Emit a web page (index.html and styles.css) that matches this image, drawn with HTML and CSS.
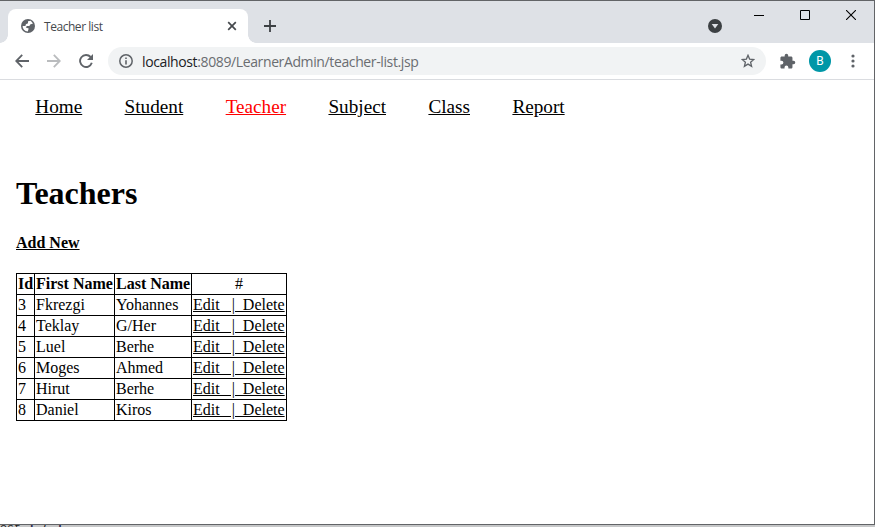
FILE: index.html
```html
<!DOCTYPE html>
<html lang="en">
<head>
<meta charset="utf-8">
<title>Teacher list</title>
<link rel="stylesheet" href="styles.css">
</head>
<body>
<div class="window">
  <header class="tabstrip">
    <div class="tab">
      <svg class="favicon" width="14" height="14" viewBox="0 0 14 14"><circle cx="7" cy="7" r="7" fill="#5f6368"/><path d="M7 2.2 9.7 1.8 12 4.6 9.2 5.4 8.4 7H5.8L4.8 8.6 7.7 9.4 6.8 12.4A5.6 5.6 0 0 1 1.6 7L4.4 7 4.9 5.2 7 4.2Z" fill="#fff"/></svg>
      <span class="tab-title">Teacher list</span>
      <svg class="tab-close" width="10" height="10" viewBox="0 0 10 10"><path d="M1.2 1.2 8.8 8.8M8.8 1.2 1.2 8.8" stroke="#45494d" stroke-width="1.7"/></svg>
    </div>
    <svg class="new-tab" width="12" height="12" viewBox="0 0 12 12"><path d="M6 0V12M0 6H12" stroke="#3c4043" stroke-width="1.8"/></svg>
    <svg class="tab-search" width="14" height="14" viewBox="0 0 14 14"><circle cx="7" cy="7" r="7" fill="#3c4043"/><path d="M3.7 5H10.3L7 9.5Z" fill="#dee1e6"/></svg>
    <div class="controls">
      <svg width="10" height="10" viewBox="0 0 10 10"><path d="M0 5.5H10" stroke="#000"/></svg>
      <svg width="10" height="10" viewBox="0 0 10 10"><path d="M.5 .5H9.5V9.5H.5Z" fill="none" stroke="#000"/></svg>
      <svg width="10" height="10" viewBox="0 0 10 10"><path d="M0 0 10 10M10 0 0 10" stroke="#000" stroke-width="1.1"/></svg>
    </div>
  </header>
  <div class="toolbar">
    <svg class="back" width="14" height="14" viewBox="0 0 14 14"><path d="M14 7H1.5M7.2 .8 1.2 7 7.2 13.2" fill="none" stroke="#5f6368" stroke-width="1.8"/></svg>
    <svg class="forward" width="14" height="14" viewBox="0 0 14 14"><path d="M0 7H12.5M6.8 .8 12.8 7 6.8 13.2" fill="none" stroke="#babcbe" stroke-width="1.8"/></svg>
    <svg class="reload" width="14" height="14" viewBox="0 0 14 14"><path d="M11.6 3A6 6 0 1 0 12.8 8.8" fill="none" stroke="#5f6368" stroke-width="1.9"/><path d="M14 0V6H8Z" fill="#5f6368"/></svg>
    <div class="address">
      <svg width="14" height="14" viewBox="0 0 14 14"><circle cx="7" cy="7" r="6.2" fill="none" stroke="#5f6368" stroke-width="1.5"/><path d="M7 6.2V10.6M7 3.4V5" stroke="#5f6368" stroke-width="1.6"/></svg>
      <span class="url"><span class="host">localhost</span>:8089/LearnerAdmin/teacher-list.jsp</span>
      <svg class="star" width="14" height="14" viewBox="0 0 14 14"><path d="M7 1.3 8.6 5.1 12.8 5.5 9.6 8.2 10.6 12.3 7 10.1 3.4 12.3 4.4 8.2 1.2 5.5 5.4 5.1Z" fill="none" stroke="#5f6368" stroke-width="1.3"/></svg>
    </div>
    <svg class="puzzle" width="17" height="17" viewBox="0 0 24 24"><path d="M20.5 11H19V7c0-1.1-.9-2-2-2h-4V3.5a2.5 2.5 0 0 0-5 0V5H4c-1.1 0-2 .9-2 2v3.8h1.5a2.7 2.7 0 0 1 0 5.4H2V20c0 1.1.9 2 2 2h3.8v-1.5a2.7 2.7 0 0 1 5.4 0V22H17c1.1 0 2-.9 2-2v-4h1.5a2.5 2.5 0 0 0 0-5z" fill="#5f6368"/></svg>
    <div class="avatar">B</div>
    <svg class="more" width="4" height="14" viewBox="0 0 4 14"><g fill="#5f6368"><circle cx="2" cy="2" r="1.6"/><circle cx="2" cy="7" r="1.6"/><circle cx="2" cy="12" r="1.6"/></g></svg>
  </div>
  <main class="page">
    <nav class="menu">
      <a>Home</a><a>Student</a><a class="active">Teacher</a><a>Subject</a><a>Class</a><a>Report</a>
    </nav>
    <h1>Teachers</h1>
    <a class="add">Add New</a>
    <table>
      <colgroup><col class="c-id"><col class="c-first"><col class="c-last"><col class="c-action"></colgroup>
      <tr><th>Id</th><th>First Name</th><th>Last Name</th><td class="hash">#</td></tr>
      <tr><td>3</td><td>Fkrezgi</td><td>Yohannes</td><td><a>Edit &nbsp;&nbsp;|&nbsp; Delete</a></td></tr>
      <tr><td>4</td><td>Teklay</td><td>G/Her</td><td><a>Edit &nbsp;&nbsp;|&nbsp; Delete</a></td></tr>
      <tr><td>5</td><td>Luel</td><td>Berhe</td><td><a>Edit &nbsp;&nbsp;|&nbsp; Delete</a></td></tr>
      <tr><td>6</td><td>Moges</td><td>Ahmed</td><td><a>Edit &nbsp;&nbsp;|&nbsp; Delete</a></td></tr>
      <tr><td>7</td><td>Hirut</td><td>Berhe</td><td><a>Edit &nbsp;&nbsp;|&nbsp; Delete</a></td></tr>
      <tr><td>8</td><td>Daniel</td><td>Kiros</td><td><a>Edit &nbsp;&nbsp;|&nbsp; Delete</a></td></tr>
    </table>
  </main>
</div>
<footer class="behind"><span class="code">ost <b>l</b> ( <b>l</b></span></footer>
</body>
</html>
```
FILE: styles.css
```css
* { box-sizing: border-box; }
body { margin: 0; height: 527px; overflow: hidden; background: #fff; }
svg { display: block; flex: none; }
.window { width: 875px; height: 525px; border: solid #626467; border-width: 1px 1px 1px 0; display: flex; flex-direction: column; }
.tabstrip { height: 42px; flex: none; background: #dee1e6; display: flex; padding-left: 8px; }
.tab { position: relative; width: 240px; height: 34px; margin-top: 8px; background: #fff; border-radius: 8px 8px 0 0; display: flex; align-items: center; padding: 0 11px 0 13px; font: 12px "Open Sans", sans-serif; color: #45494d; }
.tab::before, .tab::after { content: ""; position: absolute; bottom: 0; width: 8px; height: 8px; }
.tab::before { left: -8px; background: radial-gradient(circle at 0 0, transparent 7.5px, #fff 8px); }
.tab::after { right: -8px; background: radial-gradient(circle at 100% 0, transparent 7.5px, #fff 8px); }
.tab-title { margin-left: 9px; letter-spacing: -.45px; }
.tab-close { margin-left: auto; }
.new-tab { margin: 19px 0 0 16px; }
.tab-search { margin: 18px 0 0 auto; }
.controls { display: flex; gap: 36px; margin: 9px 18px 0 32px; }
.toolbar { height: 37px; flex: none; border-bottom: 1px solid #dadce0; display: flex; align-items: center; padding: 0 19px 0 15px; }
.forward { margin-left: 18px; }
.reload { margin-left: 18px; }
.address { width: 658px; height: 28px; margin-left: 15px; border-radius: 14px; background: #f1f3f4; display: flex; align-items: center; padding: 0 11px; font: 14px "Open Sans", sans-serif; color: #6a6d71; }
.url { margin-left: 9px; letter-spacing: -.38px; white-space: nowrap; }
.host { color: #202124; }
.star { margin-left: auto; }
.puzzle { margin-left: 13px; }
.avatar { width: 22px; height: 22px; margin-left: 13px; border-radius: 50%; background: #0097a7; color: #fff; font: 12px/22px Roboto, sans-serif; text-align: center; }
.more { margin-left: auto; }
.page { flex: 1; padding: 16px; font: 16px/18px "Liberation Serif", serif; color: #000; }
.page a { text-decoration: underline; }
.menu { display: flex; gap: 42.4px; padding-left: 19.3px; font-size: 19.2px; line-height: 22px; }
.menu .active { color: #f00; }
h1 { margin: 57px 0 0; font-size: 32px; line-height: 36px; }
.add { display: block; margin-top: 23px; font-weight: bold; }
table { width: 271px; margin-top: 21px; border-collapse: collapse; table-layout: fixed; }
.c-id { width: 18px; }
.c-first { width: 80px; }
.c-last { width: 77px; }
.c-action { width: 95px; }
th, td { height: 21px; padding: 1px; border: 1px solid #000; text-align: left; white-space: nowrap; }
.hash { text-align: center; }
.behind { height: 2px; overflow: hidden; background: #c6c7c8; font: 11.7px/14px "Liberation Mono", monospace; color: #222; }
.code { display: block; margin-top: -4px; }
.code b { color: #2a2a50; }
```
